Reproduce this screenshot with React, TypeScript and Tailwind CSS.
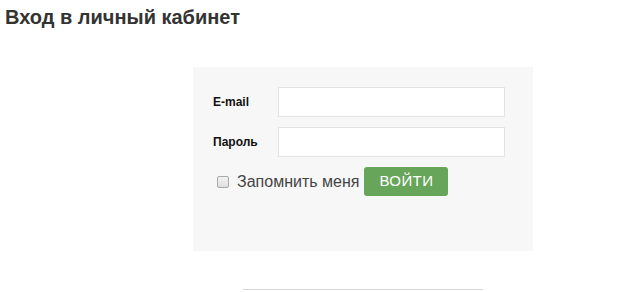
export default function App() {
  return (
    <div className="bg-white w-[644px] h-[292px] overflow-hidden" style={{ fontFamily: '"Liberation Sans", Arial, sans-serif' }}>
      <h1 className="ml-[5px] mt-[5px] text-[20px] leading-6 font-bold text-[#333333]">Вход в личный кабинет</h1>
      <div className="ml-[193px] mt-[38px] w-[340px] h-[184px] bg-[#f7f7f7] pt-[20px] pl-[20px]">
        <div className="flex items-center h-[30px]">
          <label className="w-[65px] text-[12px] font-bold text-[#111111]">E-mail</label>
          <div className="w-[227px] h-[30px] bg-white border border-[#e3e3e3]" />
        </div>
        <div className="flex items-center h-[30px] mt-[10px]">
          <label className="w-[65px] text-[12px] font-bold text-[#111111]">Пароль</label>
          <div className="w-[227px] h-[30px] bg-white border border-[#e3e3e3]" />
        </div>
        <div className="flex items-center mt-[10px] h-[29px]">
          <div className="ml-[4px] w-[12px] h-[12px] rounded-[2px] border border-[#a9a9a9] bg-gradient-to-b from-[#f2f2f2] to-[#e0e0e0]" />
          <span className="ml-[8px] text-[16px] text-[#444444]">Запомнить меня</span>
          <button className="ml-[5px] w-[84px] h-[29px] rounded-[3px] bg-[#67a55a] text-white text-[15px] tracking-[0.4px]">ВОЙТИ</button>
        </div>
      </div>
      <div className="ml-[243px] mt-[38px] w-[240px] h-px bg-[#d6d6d6]" />
    </div>
  );
}
